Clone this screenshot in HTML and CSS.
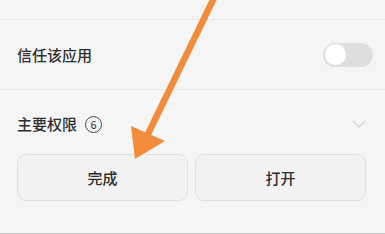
FILE: index.html
```html
<!DOCTYPE html>
<html lang="zh">
<head>
<meta charset="utf-8">
<link rel="stylesheet" href="styles.css">
</head>
<body>
<div class="page">
  <div class="top"></div>
  <div class="row">
    <span class="label">信任该应用</span>
    <span class="toggle"><span class="knob"></span></span>
  </div>
  <div class="perm">
    <div class="perm-head">
      <span class="label">主要权限</span>
      <span class="badge">6</span>
      <svg class="chev" width="14" height="8" viewBox="0 0 14 8"><polyline points="1,1 7,7 13,1" fill="none" stroke="#cfcfcf" stroke-width="1.2"/></svg>
    </div>
    <div class="buttons">
      <button class="btn">完成</button>
      <button class="btn">打开</button>
    </div>
  </div>
  <svg class="arrow" width="385" height="234" viewBox="0 0 385 234">
    <line x1="214" y1="-2" x2="148" y2="134" stroke="#f08c3c" stroke-width="6.5"/>
    <polygon points="131,126 165,141 135,159" fill="#f08c3c"/>
  </svg>
</div>
</body>
</html>
```

FILE: styles.css
```css
* { box-sizing: border-box; }
html, body { margin: 0; padding: 0; }
body {
  background: #f5f5f5;
  font-family: "Noto Sans CJK SC", "Noto Sans", sans-serif;
  color: #333;
}
.page {
  position: relative;
  width: 385px;
  height: 234px;
  overflow: hidden;
  border-bottom: 1px solid #c8c8c8;
}
.top {
  height: 20px;
  border-bottom: 1px solid #e6e6e6;
}
.row {
  height: 70px;
  padding: 0 12px 0 17px;
  display: flex;
  align-items: center;
  justify-content: space-between;
  border-bottom: 1px solid #e6e6e6;
}
.label {
  font-size: 15px;
  line-height: 20px;
  font-weight: 500;
  color: #2e2e2e;
}
.toggle {
  width: 50px;
  height: 24px;
  border-radius: 12px;
  background: #dedede;
  display: flex;
  align-items: center;
  padding-left: 2px;
}
.knob {
  width: 21px;
  height: 21px;
  border-radius: 50%;
  background: #fff;
}
.perm {
  padding: 0 19px 0 17px;
}
.perm-head {
  margin-top: 22px;
  height: 24px;
  display: flex;
  align-items: center;
}
.badge {
  margin-left: 8px;
  width: 17px;
  height: 17px;
  border: 1px solid #444;
  border-radius: 50%;
  font-size: 11px;
  line-height: 15px;
  text-align: center;
  color: #333;
}
.chev {
  margin-left: auto;
  margin-right: 0;
}
.buttons {
  margin-top: 18px;
  display: flex;
  gap: 7px;
}
.btn {
  flex: 1;
  height: 47px;
  border: 1px solid #e0e0e0;
  border-radius: 9px;
  background: #f2f2f2;
  font-family: "Noto Sans CJK SC", "Noto Sans", sans-serif;
  font-size: 15px;
  font-weight: 500;
  color: #2e2e2e;
  padding: 0;
}
.arrow {
  position: absolute;
  left: 0;
  top: 0;
  pointer-events: none;
}
```
